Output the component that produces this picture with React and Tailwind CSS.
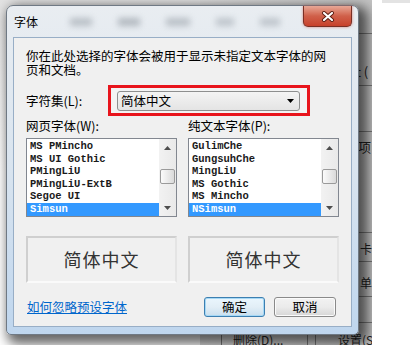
import React from "react";

function Tri({ up }) {
  return (
    <svg width="7" height="4" viewBox="0 0 7 4">
      {up ? <polygon points="0,4 7,4 3.5,0" fill="#4d4d4d" /> : <polygon points="0,0 7,0 3.5,4" fill="#4d4d4d" />}
    </svg>
  );
}

function FontList({ items, selected }) {
  return (
    <div className="w-[151px] h-[79px] border border-[#828790] bg-white flex">
      <div className="flex-1 flex flex-col pt-px font-['Liberation_Mono',monospace] text-[10.5px] font-bold min-w-0">
        {items.map((it) => (
          <div
            key={it}
            className={
              "h-[12.6px] leading-[12.6px] pl-[3px] whitespace-nowrap overflow-hidden " +
              (it === selected ? "bg-[#3399ff] text-white" : "text-[#1a1a1a]")
            }
          >
            {it}
          </div>
        ))}
      </div>
      <div className="w-[17px] flex flex-col bg-gradient-to-r from-[#f2f2f2] to-[#e9e9e9]">
        <div className="h-[17px] flex items-center justify-center">
          <Tri up />
        </div>
        <div className="flex-1 flex flex-col px-px">
          <div className="mt-[13px] h-[15px] rounded-[2px] border border-[#9a9a9a] bg-gradient-to-r from-[#fbfbfb] to-[#dadada]" />
        </div>
        <div className="h-[17px] flex items-center justify-center">
          <Tri />
        </div>
      </div>
    </div>
  );
}

function Preview() {
  return (
    <div className="w-[151px] h-[47px] border-2 border-t-[#cfcfcf] border-l-[#cfcfcf] border-r-[#e4e4e4] border-b-[#fafafa] flex items-center justify-center text-[18px] text-[#333] tracking-[1px]">
      简体中文
    </div>
  );
}

export default function App() {
  return (
    <div className="relative w-[418px] h-[355px] bg-white overflow-hidden font-['Noto_Sans_CJK_SC',sans-serif] text-black">
      {/* captured screen area */}
      <div className="absolute left-0 top-0 w-[372px] h-[345px] overflow-hidden bg-gradient-to-b from-[#e2e2e2] via-white to-white">
        {/* background window */}
        <div className="absolute left-[200px] top-0 w-[172px] h-[345px] bg-gradient-to-r from-[#dedede] to-[#c2c2c2]">
          <div className="absolute left-[158px] top-[33px] w-[20px] h-px bg-[#7a7a7a]" />
          <div className="absolute left-[158px] top-[85px] w-[20px] h-px bg-[#7a7a7a]" />
          <div className="absolute left-[158px] top-[131px] w-[20px] h-px bg-[#7a7a7a]" />
          <div className="absolute left-[158px] top-[232px] w-[20px] h-px bg-[#7a7a7a]" />
          <div className="absolute left-[158px] top-[261px] w-[20px] h-px bg-[#7a7a7a]" />
          <div className="absolute left-[158px] top-[296px] w-[20px] h-px bg-[#7a7a7a]" />
          <div className="absolute left-[156px] top-[64px] text-[13px] leading-[16px] whitespace-nowrap text-[#222]">t (</div>
          <div className="absolute left-[158px] top-[139px] text-[13px] leading-[16px] text-[#222]">项</div>
          <div className="absolute left-[160px] top-[242px] text-[12px] leading-[14px] text-[#222]">卡</div>
          <div className="absolute left-[160px] top-[276px] text-[12px] leading-[14px] text-[#222]">单</div>
          <div className="absolute left-[21px] top-[322px] w-[87px] h-[30px] border border-[#7a7a7a] rounded-[3px]" />
          <div className="absolute left-[115px] top-[322px] w-[80px] h-[30px] border border-[#7a7a7a] rounded-[3px]" />
          <div className="absolute left-[33px] top-[333px] text-[12px] leading-[14px] whitespace-nowrap text-[#222]">删除(D)...</div>
          <div className="absolute left-[138px] top-[333px] text-[12px] leading-[14px] whitespace-nowrap text-[#222]">设置(S)</div>
        </div>

        {/* dialog window */}
        <div className="absolute left-[6px] top-[5px] w-[353px] h-[330px] rounded-t-[7px] rounded-b-[5px] border border-[#6f7984] bg-gradient-to-b from-[#e9edf1] via-[#d9e4ef] to-[#bfd6ee] shadow-[5px_5px_12px_4px_rgba(0,0,0,0.6)] flex flex-col px-[6px] pb-[7px]">
          {/* title bar */}
          <div className="relative h-[31px] flex items-center shrink-0">
            <span className="ml-px text-[12px] leading-[14px] text-black">字体</span>
            <div className="ml-[32px] flex items-center gap-[26px] opacity-60">
              <span className="w-[22px] h-[8px] bg-[#9aa2aa] blur-[3px]" />
              <span className="w-[22px] h-[8px] bg-[#8f979f] blur-[3px]" />
              <span className="w-[24px] h-[8px] bg-[#9aa2aa] blur-[3px]" />
              <span className="w-[18px] h-[8px] bg-[#a3abb3] blur-[3px]" />
              <span className="w-[20px] h-[8px] bg-[#a3abb3] blur-[3px]" />
            </div>
            <div className="absolute right-0 top-0 w-[49px] h-[21px] rounded-b-[5px] border border-t-0 border-[#7a2f24] bg-gradient-to-b from-[#e7a796] via-[#d0604a] to-[#c7402a] shadow-[0_0_3px_rgba(200,60,40,0.6)] flex items-center justify-center">
              <svg width="14" height="11" viewBox="0 0 14 11">
                <path d="M3 2 L11 9 M11 2 L3 9" stroke="#5a1c12" strokeWidth="4" strokeLinecap="round" />
                <path d="M3 2 L11 9 M11 2 L3 9" stroke="#ffffff" strokeWidth="2.2" strokeLinecap="round" />
              </svg>
            </div>
          </div>

          {/* client area */}
          <div className="flex-1 border border-[#98aec6] bg-[#f0f0f0] flex flex-col px-[12px] pt-[11px]">
            <p className="text-[12.5px] leading-[14px] text-black">
              你在此处选择的字体会被用于显示未指定文本字体的网
              <br />
              页和文档。
            </p>

            <div className="mt-[8px] flex items-center">
              <span className="w-[82px] shrink-0 text-[12.5px] leading-[14px]">字符集(L):</span>
              <div className="w-[202px] h-[31px] border-[3px] border-[#e8141c] bg-[#f3f3f3] pl-[6px] pr-[7px] pt-[3px]">
                <div className="h-[20px] rounded-[3px] border border-[#8e8f8f] bg-gradient-to-b from-[#f4f4f4] to-[#e4e4e4] flex items-center pl-[3px] pr-[5px]">
                  <span className="flex-1 text-[12.5px] leading-[14px]">简体中文</span>
                  <svg width="7" height="4" viewBox="0 0 7 4">
                    <polygon points="0,0 7,0 3.5,4" fill="#000" />
                  </svg>
                </div>
              </div>
            </div>

            <div className="mt-[3px] flex gap-[11px] text-[12.5px] leading-[13px]">
              <span className="w-[151px]">网页字体(W):</span>
              <span className="w-[151px]">纯文本字体(P):</span>
            </div>

            <div className="mt-[6px] flex gap-[11px]">
              <FontList
                items={["MS PMincho", "MS UI Gothic", "PMingLiU", "PMingLiU-ExtB", "Segoe UI", "Simsun"]}
                selected="Simsun"
              />
              <FontList
                items={["GulimChe", "GungsuhChe", "MingLiU", "MS Gothic", "MS Mincho", "NSimsun"]}
                selected="NSimsun"
              />
            </div>

            <div className="mt-[19px] flex gap-[11px]">
              <Preview />
              <Preview />
            </div>

            <div className="mt-[14px] flex items-center pl-px pr-[3px]">
              <span className="text-[12.5px] leading-[14px] text-[#0066cc] underline">如何忽略预设字体</span>
              <div className="flex-1" />
              <button className="w-[61px] h-[20px] rounded-[3px] border border-[#3c7fb1] bg-gradient-to-b from-[#eaf6fd] via-[#e2eef6] to-[#c9dfee] shadow-[inset_0_0_0_1px_#a6d8f5] text-[12.5px] leading-[14px] flex items-center justify-center">
                确定
              </button>
              <button className="ml-[9px] w-[62px] h-[20px] rounded-[3px] border border-[#8a8a8a] bg-gradient-to-b from-[#f2f2f2] via-[#ebebeb] to-[#d6d6d6] shadow-[inset_0_0_0_1px_#fbfbfb] text-[12.5px] leading-[14px] flex items-center justify-center">
                取消
              </button>
            </div>
          </div>
        </div>
      </div>
      <div className="absolute left-[382px] top-0 w-[28px] h-[3px] bg-[#e3e3e3]" />
    </div>
  );
}
